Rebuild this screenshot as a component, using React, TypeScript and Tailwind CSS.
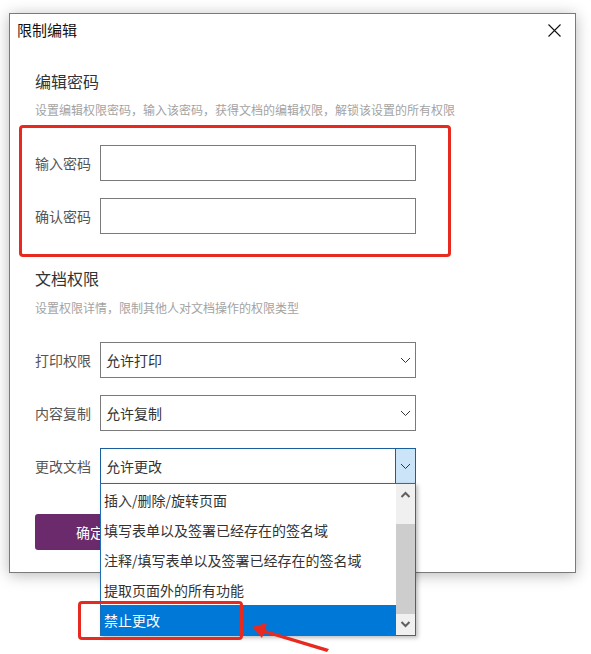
import React from "react";

const Chevron = ({ up = false, cls = "" }: { up?: boolean; cls?: string }) => (
  <svg width="11" height="7" viewBox="0 0 11 7" className={cls}>
    <polyline
      points={up ? "1,6 5.5,1.5 10,6" : "1,1 5.5,5.5 10,1"}
      fill="none"
      stroke="currentColor"
      strokeWidth="1"
    />
  </svg>
);

const ScrollArrow = ({ up = false }: { up?: boolean }) => (
  <svg width="11" height="7" viewBox="0 0 11 7">
    <polyline
      points={up ? "1.5,6 5.5,2 9.5,6" : "1.5,1 5.5,5 9.5,1"}
      fill="none"
      stroke="#606060"
      strokeWidth="2"
    />
  </svg>
);

function InputRow({ label }: { label: string }) {
  return (
    <div className="flex items-center h-[36px]">
      <div className="w-[65px] text-[14px] text-[#555]">{label}</div>
      <div className="w-[316px] h-[36px] border border-[#7a7a7a] bg-white" />
    </div>
  );
}

function SelectRow({ label, value, focused = false }: { label: string; value: string; focused?: boolean }) {
  return (
    <div className="flex items-center h-[36px]">
      <div className="w-[65px] text-[14px] text-[#555]">{label}</div>
      {focused ? (
        <div className="w-[316px] h-[36px] border border-[#1b5e9e] bg-white flex items-stretch">
          <div className="flex-1 flex items-center pl-[5px] text-[14px] text-[#333]">{value}</div>
          <div className="w-[20px] bg-[#cce4f7] border-l border-[#1b5e9e] flex items-center justify-center text-[#333]">
            <Chevron />
          </div>
        </div>
      ) : (
        <div className="w-[316px] h-[36px] border border-[#7a7a7a] bg-white flex items-center justify-between pl-[5px] pr-[4px]">
          <span className="text-[14px] text-[#333]">{value}</span>
          <Chevron cls="text-[#333]" />
        </div>
      )}
    </div>
  );
}

export default function App() {
  const items = [
    "插入/删除/旋转页面",
    "填写表单以及签署已经存在的签名域",
    "注释/填写表单以及签署已经存在的签名域",
    "提取页面外的所有功能",
  ];
  return (
    <div
      className="relative w-[591px] h-[654px] bg-white overflow-hidden"
      style={{ fontFamily: '"Noto Sans CJK SC", "Noto Sans", sans-serif' }}
    >
      <div className="pt-[13px] pl-[9px]">
        <div className="w-[567px] h-[560px] border border-[#7a7a7a] bg-white shadow-[0_2px_14px_rgba(0,0,0,0.28)]">
          <div className="h-[32px] flex items-center justify-between pl-[7px] pr-[14px]">
            <span className="text-[15px] text-[#111] leading-[20px]">限制编辑</span>
            <svg width="13" height="13" viewBox="0 0 13 13">
              <path d="M0.5 0.5 L12.5 12.5 M12.5 0.5 L0.5 12.5" stroke="#111" strokeWidth="1.1" />
            </svg>
          </div>
          <div className="pl-[25px] flex flex-col">
            <div className="mt-[24px] text-[16px] leading-[22px] text-[#333]">编辑密码</div>
            <div className="mt-[9px] text-[12px] leading-[18px] text-[#a3a3a3]">
              设置编辑权限密码，输入该密码，获得文档的编辑权限，解锁该设置的所有权限
            </div>
            <div className="mt-[26px] flex flex-col gap-[17px]">
              <InputRow label="输入密码" />
              <InputRow label="确认密码" />
            </div>
            <div className="mt-[33px] text-[16px] leading-[22px] text-[#333]">文档权限</div>
            <div className="mt-[10px] text-[12px] leading-[18px] text-[#a3a3a3]">
              设置权限详情，限制其他人对文档操作的权限类型
            </div>
            <div className="mt-[25px] flex flex-col gap-[17px]">
              <SelectRow label="打印权限" value="允许打印" />
              <SelectRow label="内容复制" value="允许复制" />
              <SelectRow label="更改文档" value="允许更改" focused />
            </div>
            <div className="mt-[30px] w-[110px] h-[36px] rounded-[3px] bg-[#6b2a6c] text-white text-[14px] flex items-center justify-center">
              确定
            </div>
          </div>
        </div>
      </div>

      {/* dropdown list */}
      <div className="absolute left-[100px] top-[483px] w-[316px] h-[153px] border border-[#1e6db5] bg-white flex shadow-[2px_2px_4px_rgba(0,0,0,0.25)]">
        <div className="flex-1 flex flex-col pt-[1px]">
          {items.map((t) => (
            <div key={t} className="h-[30px] flex items-center pl-[3px] text-[14px] text-[#333] whitespace-nowrap">
              {t}
            </div>
          ))}
          <div className="h-[30px] flex items-center pl-[3px] text-[14px] text-white bg-[#0078d7]">禁止更改</div>
        </div>
        <div className="w-[19px] bg-[#f0f0f0] flex flex-col">
          <div className="h-[20px] flex items-center justify-center">
            <ScrollArrow up />
          </div>
          <div className="h-[20px]" />
          <div className="h-[90px] bg-[#cdcdcd]" />
          <div className="flex-1 flex items-center justify-center">
            <ScrollArrow />
          </div>
        </div>
      </div>

      {/* annotations */}
      <div className="absolute left-[19px] top-[125px] w-[432px] h-[132px] border-[3px] border-[#e8291f] rounded-[4px]" />
      <div className="absolute left-[78px] top-[601px] w-[165px] h-[39px] border-[3px] border-[#e8291f] rounded-[4px]" />
      <svg className="absolute left-[245px] top-[615px]" width="100" height="40" viewBox="0 0 100 40">
        <polygon points="84,34 82,37 16,17 17,14" fill="#e8291f" />
        <polygon points="7,12 22,8 17,23" fill="#e8291f" />
      </svg>
    </div>
  );
}
